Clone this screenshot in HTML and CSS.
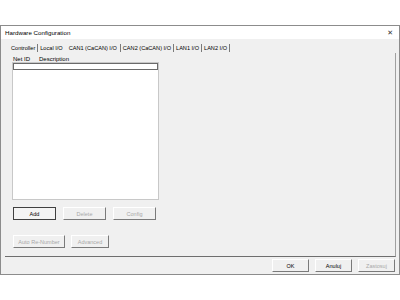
FILE: index.html
```html
<!DOCTYPE html>
<html>
  <head>
    <link rel="stylesheet" href="styles.css">
  </head>
  <body>
    <div class="window">
      <div class="titlebar">
        <span class="title">Hardware Configuration</span>
        <span class="close">✕</span>
      </div>

      <div class="client">
        <div class="tabs">
          <span class="tab">Controller</span>
          <span class="tab before-active">Local I/O</span>
          <span class="tab active">CAN1 (CaCAN) I/O</span>
          <span class="tab">CAN2 (CaCAN) I/O</span>
          <span class="tab">LAN1 I/O</span>
          <span class="tab">LAN2 I/O</span>
        </div>

        <div class="panel">
          <div class="list-header">
            <span class="col-id">Net ID</span>
            <span>Description</span>
          </div>
          <div class="list">
            <div class="list-edit"></div>
          </div>

          <div class="button-row">
            <button class="btn default">Add</button>
            <button class="btn" disabled>Delete</button>
            <button class="btn" disabled>Config</button>
          </div>

          <div class="button-row second">
            <button class="btn wide" disabled>Auto Re-Number</button>
            <button class="btn mid" disabled>Advanced</button>
          </div>
        </div>

        <div class="footer">
          <button class="btn footer-btn">OK</button>
          <button class="btn footer-btn">Anuluj</button>
          <button class="btn footer-btn" disabled>Zastosuj</button>
        </div>
      </div>
    </div>
  </body>
</html>
```

FILE: styles.css
```css
body {
  margin: 0;
  background-color: #ffffff;
  font-family: "Liberation Sans", "DejaVu Sans", sans-serif;
  font-size: 6px;
  color: #000000;
}

.window {
  margin-top: 25px;
  width: 398px;
  height: 248px;
  border: 1px solid #8c8c8c;
  display: flex;
  flex-direction: column;
}

.titlebar {
  height: 13px;
  background-color: #ffffff;
  display: flex;
  align-items: center;
  justify-content: space-between;
  padding: 0 6px 0 4px;
  font-size: 6.2px;
}

.close {
  font-size: 7px;
  color: #333333;
}

.client {
  flex: 1;
  background-color: #f0f0f0;
  display: flex;
  flex-direction: column;
  padding: 3px 3px 0 4px;
}

.tabs {
  display: flex;
  height: 11px;
  align-items: center;
  padding-left: 4px;
  font-size: 5.6px;
}

.tab {
  padding: 0 2px;
  border-right: 1px solid #7a7a7a;
  line-height: 8px;
}

.tab.before-active {
  border-right-color: transparent;
}

.tab.active {
  padding: 0 3px;
  background-color: #f0f0f0;
}

.panel {
  height: 201px;
  border-right: 1px solid #a0a0a0;
  border-bottom: 1px solid #6e6e6e;
  padding: 2px 0 0 7px;
  display: flex;
  flex-direction: column;
}

.list-header {
  display: flex;
  height: 7px;
  align-items: center;
  padding-left: 1px;
}

.col-id {
  width: 26px;
}

.list {
  width: 145px;
  height: 136px;
  background-color: #ffffff;
  border: 1px solid #c8c8c8;
}

.list-edit {
  height: 5px;
  border: 1px solid #6a6a6a;
  background-color: #ffffff;
}

.button-row {
  display: flex;
  gap: 7px;
  margin-top: 7px;
  padding-left: 1px;
}

.button-row.second {
  margin-top: 15px;
  gap: 6px;
}

.btn {
  width: 43px;
  height: 13px;
  padding: 0;
  font-family: inherit;
  font-size: 5.5px;
  background-color: #f0f0f0;
  border: 1px solid #ffffff;
  border-right-color: #7a7a7a;
  border-bottom-color: #7a7a7a;
  color: #000000;
}

.btn:disabled {
  color: #a8a8a8;
}

.btn.default {
  border: 1px solid #404040;
  background-color: #f4f4f4;
}

.btn.wide {
  width: 52px;
}

.btn.mid {
  width: 38px;
}

.footer {
  display: flex;
  justify-content: flex-end;
  gap: 6px;
  padding: 2px 1px 0 0;
}

.footer-btn {
  width: 37px;
}
```
